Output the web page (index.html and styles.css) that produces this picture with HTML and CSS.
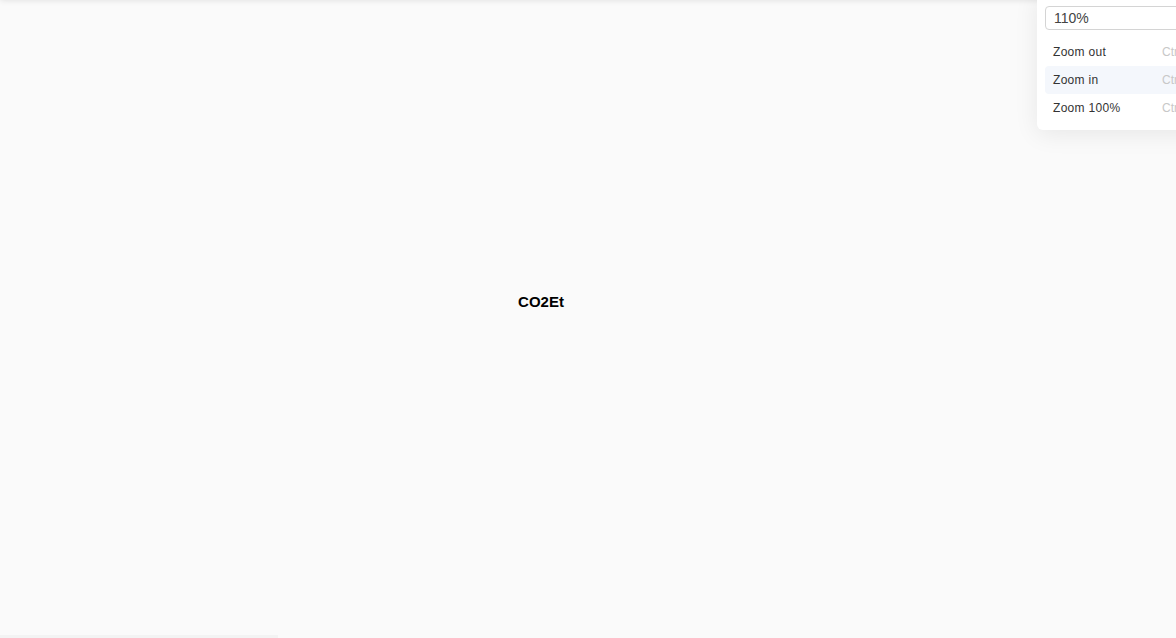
FILE: index.html
```html
<!DOCTYPE html>
<html>
<head>
<meta charset="utf-8">
<link rel="stylesheet" href="styles.css">
</head>
<body>
<div class="topbar"></div>
<main class="canvas">
  <div class="label">CO2Et</div>
</main>
<div class="bottom-strip"></div>
<div class="menu">
  <div class="zoom-input">110%</div>
  <div class="item"><span class="name">Zoom out</span><span class="key">Ctrl+-</span></div>
  <div class="item active"><span class="name">Zoom in</span><span class="key">Ctrl++</span></div>
  <div class="item"><span class="name">Zoom 100%</span><span class="key">Ctrl+0</span></div>
</div>
</body>
</html>
```
FILE: styles.css
```css
html, body {
  margin: 0;
  height: 100%;
  overflow: hidden;
}
body {
  background: #fafafa;
  font-family: "Liberation Sans", Arial, sans-serif;
  position: relative;
}
.topbar {
  position: absolute;
  top: -10px;
  left: 0;
  right: 0;
  height: 10px;
  box-shadow: 0 0 6px rgba(0, 0, 0, 0.12);
  background: #fff;
}
.canvas {
  height: 100%;
  display: flex;
  align-items: center;
  justify-content: center;
  padding-right: 94px;
  padding-bottom: 36px;
  box-sizing: border-box;
}
.label {
  font-weight: bold;
  font-size: 15px;
  color: #000;
}
.bottom-strip {
  position: absolute;
  left: 0;
  bottom: 0;
  width: 278px;
  height: 3px;
  background: #f3f3f3;
}
.menu {
  position: absolute;
  top: -8px;
  left: 1037px;
  width: 200px;
  padding: 14px 8px 8px;
  background: #fff;
  border-radius: 6px;
  box-shadow: 0 4px 24px rgba(0, 0, 0, 0.08);
  box-sizing: border-box;
}
.zoom-input {
  height: 24px;
  box-sizing: border-box;
  border: 1px solid #d4d4d4;
  border-radius: 4px;
  padding: 0 8px;
  font-size: 14px;
  line-height: 22px;
  color: #444;
  margin-bottom: 8px;
}
.item {
  height: 28px;
  display: flex;
  align-items: center;
  padding-left: 8px;
  font-size: 12px;
  letter-spacing: 0.3px;
  color: #333;
  border-radius: 4px;
}
.item.active {
  background: #f4f7fc;
}
.name {
  width: 109px;
}
.key {
  color: #c8c8c8;
  letter-spacing: 0;
}
```
